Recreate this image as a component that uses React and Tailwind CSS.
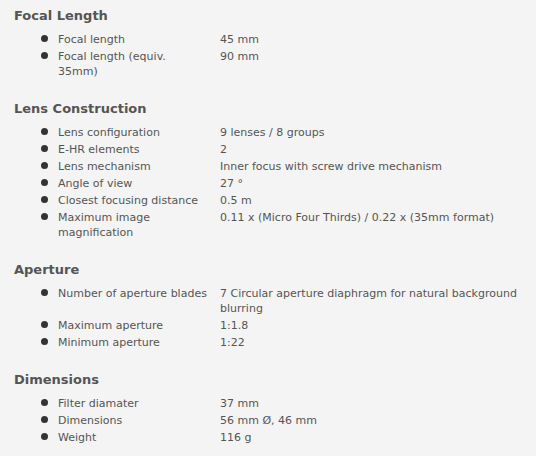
import React from "react";

const sections = [
  {
    title: "Focal Length",
    rows: [
      ["Focal length", "45 mm"],
      [["Focal length (equiv.", "35mm)"], "90 mm"],
    ],
  },
  {
    title: "Lens Construction",
    rows: [
      ["Lens configuration", "9 lenses / 8 groups"],
      ["E-HR elements", "2"],
      ["Lens mechanism", "Inner focus with screw drive mechanism"],
      ["Angle of view", "27 °"],
      ["Closest focusing distance", "0.5 m"],
      [["Maximum image", "magnification"], "0.11 x (Micro Four Thirds) / 0.22 x (35mm format)"],
    ],
  },
  {
    title: "Aperture",
    rows: [
      ["Number of aperture blades", ["7 Circular aperture diaphragm for natural background", "blurring"]],
      ["Maximum aperture", "1:1.8"],
      ["Minimum aperture", "1:22"],
    ],
  },
  {
    title: "Dimensions",
    rows: [
      ["Filter diamater", "37 mm"],
      ["Dimensions", "56 mm Ø, 46 mm"],
      ["Weight", "116 g"],
    ],
  },
];

function Lines({ v }) {
  if (Array.isArray(v)) {
    return v.map((t, i) => (
      <span key={i} className="block">
        {t}
      </span>
    ));
  }
  return v;
}

export default function App() {
  return (
    <div
      className="w-[536px] h-[456px] bg-[#f4f4f4] text-[#555] pl-[14px] pt-[7px] overflow-hidden"
      style={{ fontFamily: '"DejaVu Sans", Verdana, sans-serif' }}
    >
      {sections.map((s, i) => (
        <section key={s.title} className={i === 0 ? "" : "mt-[21px]"}>
          <h2 className="text-[13px] leading-[17px] font-bold text-[#555]">{s.title}</h2>
          <ul className="mt-[8px]">
            {s.rows.map(([label, value], j) => (
              <li key={j} className="flex text-[11px] leading-[15px] mb-[2px]">
                <span className="w-[44px] shrink-0 flex justify-end pr-[10px]">
                  <span className="mt-[3px] w-[7px] h-[7px] rounded-full bg-[#333]" />
                </span>
                <span className="w-[162px] shrink-0 pr-[6px]">
                  <Lines v={label} />
                </span>
                <span className="w-[310px]">
                  <Lines v={value} />
                </span>
              </li>
            ))}
          </ul>
        </section>
      ))}
    </div>
  );
}
